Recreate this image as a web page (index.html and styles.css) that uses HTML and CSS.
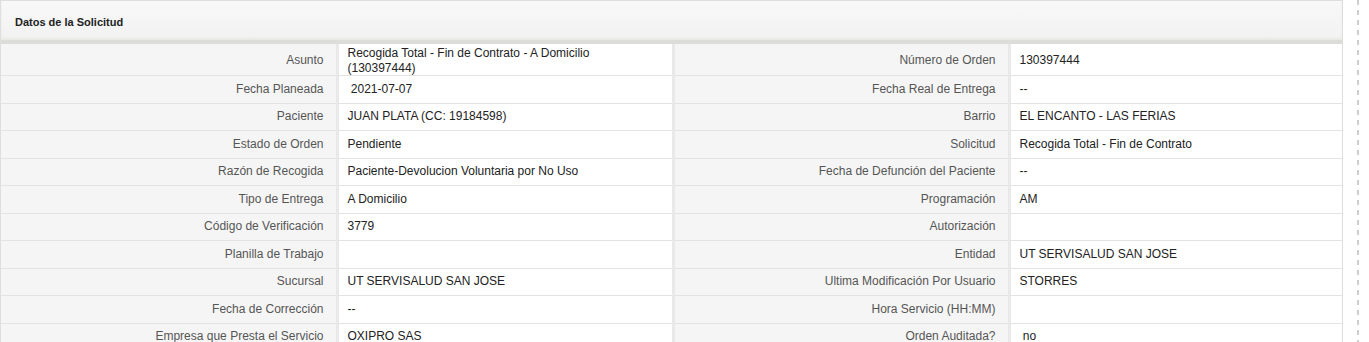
FILE: index.html
```html
<!DOCTYPE html>
<html lang="es">
<head>
<meta charset="utf-8">
<title>Datos de la Solicitud</title>
<link rel="stylesheet" href="styles.css">
</head>
<body>
<div class="page">
  <div class="panel">
    <div class="panel-heading">Datos de la Solicitud</div>
    <table class="details">
      <colgroup>
        <col class="c-label"><col class="c-value"><col class="c-label2"><col class="c-value2">
      </colgroup>
      <tbody>
        <tr class="first">
          <th>Asunto</th><td>Recogida Total - Fin de Contrato - A Domicilio<br>(130397444)</td>
          <th class="second">Número de Orden</th><td>130397444</td>
        </tr>
        <tr>
          <th>Fecha Planeada</th><td>&nbsp;2021-07-07</td>
          <th class="second">Fecha Real de Entrega</th><td>--</td>
        </tr>
        <tr>
          <th>Paciente</th><td>JUAN PLATA (CC: 19184598)</td>
          <th class="second">Barrio</th><td>EL ENCANTO - LAS FERIAS</td>
        </tr>
        <tr>
          <th>Estado de Orden</th><td>Pendiente</td>
          <th class="second">Solicitud</th><td>Recogida Total - Fin de Contrato</td>
        </tr>
        <tr>
          <th>Razón de Recogida</th><td>Paciente-Devolucion Voluntaria por No Uso</td>
          <th class="second">Fecha de Defunción del Paciente</th><td>--</td>
        </tr>
        <tr>
          <th>Tipo de Entrega</th><td>A Domicilio</td>
          <th class="second">Programación</th><td>AM</td>
        </tr>
        <tr>
          <th>Código de Verificación</th><td>3779</td>
          <th class="second">Autorización</th><td></td>
        </tr>
        <tr>
          <th>Planilla de Trabajo</th><td></td>
          <th class="second">Entidad</th><td>UT SERVISALUD SAN JOSE</td>
        </tr>
        <tr>
          <th>Sucursal</th><td>UT SERVISALUD SAN JOSE</td>
          <th class="second">Ultima Modificación Por Usuario</th><td>STORRES</td>
        </tr>
        <tr>
          <th>Fecha de Corrección</th><td>--</td>
          <th class="second">Hora Servicio (HH:MM)</th><td></td>
        </tr>
        <tr>
          <th>Empresa que Presta el Servicio</th><td>OXIPRO SAS</td>
          <th class="second">Orden Auditada?</th><td>&nbsp;no</td>
        </tr>
      </tbody>
    </table>
  </div>
  <div class="edge"></div>
</div>
</body>
</html>
```

FILE: styles.css
```css
html, body {
  margin: 0;
  padding: 0;
  background: #ffffff;
}

body {
  font-family: "Liberation Sans", Arial, sans-serif;
  font-size: 12px;
  color: #222222;
  overflow: hidden;
}

.page {
  display: flex;
  align-items: stretch;
  min-height: 342px;
}

.panel {
  width: 1341px;
  border: 1px solid #dedede;
  border-bottom: none;
  flex: none;
}

.panel-heading {
  height: 39px;
  line-height: 43px;
  padding-left: 14px;
  font-size: 11px;
  font-weight: bold;
  color: #222222;
  background: linear-gradient(#f8f8f8, #f2f2f2);
  border-bottom: 4px solid #dcdcd8;
  box-shadow: inset 0 -2px 2px #e8e8e4;
}

.details {
  border-collapse: collapse;
  table-layout: fixed;
  width: 1341px;
}

.c-label { width: 336px; }
.c-value { width: 336px; }
.c-label2 { width: 336px; }
.c-value2 { width: 333px; }

.details tr {
  height: 27.5px;
}

.details tr.first {
  height: 31px;
}

.details th,
.details td {
  padding: 2px 11px 2px 9px;
  line-height: 13px;
  border-bottom: 1px solid #e3e3e3;
  vertical-align: middle;
  white-space: nowrap;
}

.details tr.first th,
.details tr.first td {
  padding-top: 2px;
  padding-bottom: 0;
  line-height: 14.5px;
}

.details th {
  font-weight: normal;
  text-align: right;
  color: #555555;
  padding-right: 12px;
  background: #f5f5f5;
  border-right: 3px solid #e9e9e9;
}

.details th.second {
  border-left: 3px solid #e9e9e9;
}

.details td {
  background: #ffffff;
  color: #222222;
}

.edge {
  width: 2px;
  margin-left: 14px;
  background: repeating-linear-gradient(#cfcfcf 0 5px, transparent 5px 10px);
}
```
